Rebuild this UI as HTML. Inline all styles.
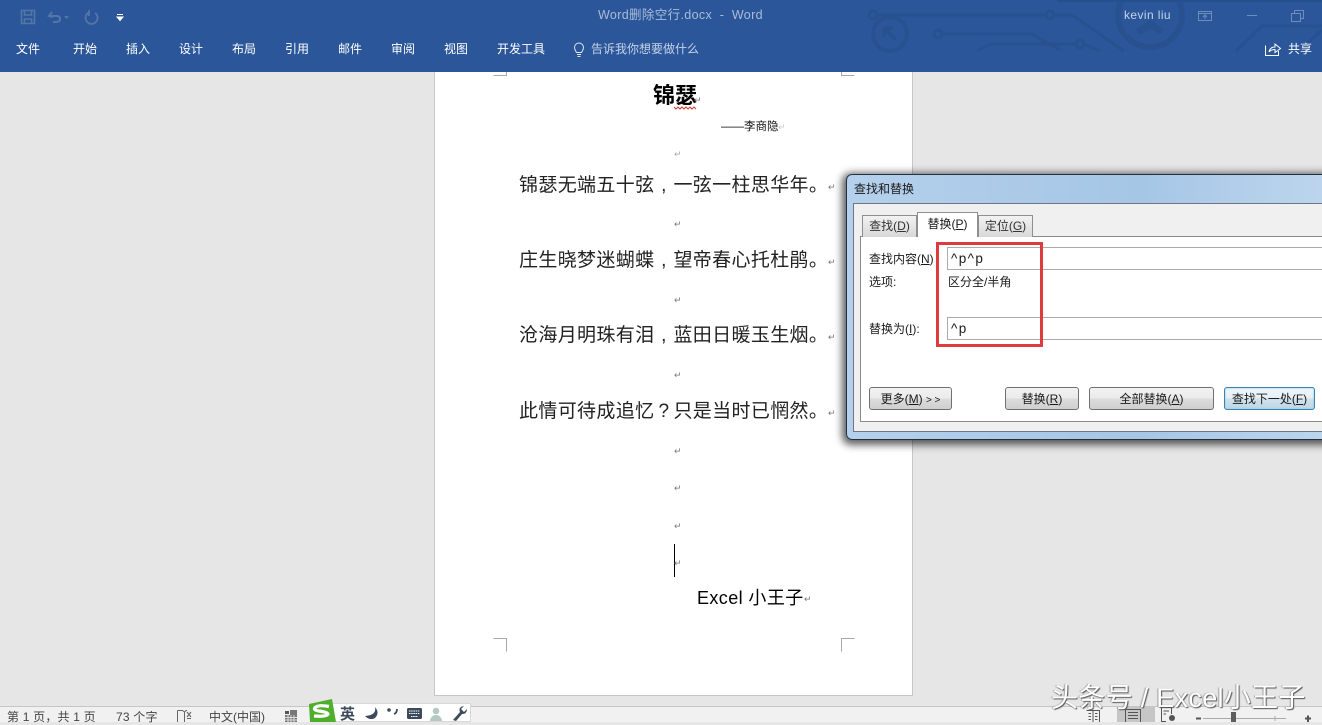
<!DOCTYPE html>
<html lang="zh"><head><meta charset="utf-8"><style>
html,body{margin:0;padding:0}
body{width:1322px;height:722px;overflow:hidden;position:relative;background:#e6e6e6;font-family:"Liberation Sans","Noto Sans CJK SC",sans-serif;color:#111}
.a{position:absolute;white-space:nowrap}
.r{color:#fff;font-size:12px;top:41px;line-height:16px}
.m{position:absolute;font-size:9px;color:#777;line-height:10px}
.p{font-size:19px;left:519px;line-height:26px;letter-spacing:0.35px;color:#222}
.p i{display:inline-block;width:19px;text-align:center;font-style:normal}
.d{font-size:12px;line-height:16px;color:#1a1a1a}
u{text-underline-offset:1px}
.b{position:absolute;top:387px;height:23px;box-sizing:border-box;border:1px solid #707070;border-radius:3px;background:linear-gradient(#f2f2f2 0,#ebebeb 48%,#dcdcdc 52%,#cfcfcf 100%);font-size:12px;line-height:23px;text-align:center;color:#1a1a1a}
.s{font-size:12px;top:709px;line-height:16px;color:#444;letter-spacing:.2px}
</style></head><body>
<!-- title bar -->
<div class="a" style="left:0;top:0;width:1322px;height:72px;background:#2b579a"></div>
<svg class="a" style="left:860px;top:0" width="462" height="72" fill="none" stroke="#27528f" stroke-width="3">
<circle cx="13" cy="15" r="4"/><path d="M17 15H186"/><circle cx="190" cy="15" r="4"/><path d="M194 15H212L264 51"/>
<circle cx="30" cy="34" r="17" stroke-width="4"/><path d="M24 28L36 40M24 28h9M24 28v9" stroke-width="4"/>
<circle cx="78" cy="34" r="4"/><path d="M82 34H172L200 50"/><circle cx="220" cy="44" r="4"/><path d="M118 51Q126 44 136 44H216M224 44L240 51"/>
<circle cx="290" cy="15" r="32" stroke-width="6"/><path d="M278 32L290 24L302 32" stroke-width="7"/>
<path d="M376 51L402 26H462M446 44L462 30"/></svg>
<div class="a" style="left:1057px;top:0;width:265px;height:2px;background:#24508f"></div>
<!-- QAT -->
<svg class="a" style="left:20px;top:9px" width="110" height="16" fill="none" stroke="#5575a9" stroke-width="1.6">
<path d="M1.500 1.500H14.500V14.500H1.500ZM4.500 1.500V6H11.500V1.500M4.500 14.500V10H11.500V14.500"/>
<path d="M32 3L29 7L33 8M29.500 7H37Q40 7 40 10Q40 13 36 13H33" stroke-width="2"/><path d="M44 7h5l-2.500 3z" fill="#5575a9" stroke="none"/>
<path d="M69 3.500A6 6 0 1 0 75 4M69 1V7" stroke-width="1.800"/>
<path d="M97 5.500h6M97 8h6l-3 3.500z" stroke="#fff" stroke-width="1" fill="#fff"/></svg>
<div class="a" style="left:598px;top:7px;font-size:12.500px;line-height:16px;color:#a9bcd9;letter-spacing:.35px">Word删除空行.docx&nbsp; -&nbsp; Word</div>
<div class="a" style="left:1124px;top:7px;font-size:12px;line-height:16px;color:#c5d2e6;letter-spacing:.4px">kevin liu</div>
<svg class="a" style="left:1195px;top:8px" width="120" height="16" fill="none" stroke="#6f8dba">
<path d="M3.500 3.500H16.500V12.500H3.500ZM3.500 5.500H16.500M8 9L10 7L12 9M10 7V11"/><path d="M52 7.500H62"/><path d="M96.500 5.500H105.500V13.500H96.500ZM99.500 5.500V2.500H108.500V10.500H105.500"/></svg>
<div class="a r" style="left:16px">文件</div><div class="a r" style="left:73px">开始</div><div class="a r" style="left:126px">插入</div><div class="a r" style="left:179px">设计</div><div class="a r" style="left:232px">布局</div><div class="a r" style="left:285px">引用</div><div class="a r" style="left:338px">邮件</div><div class="a r" style="left:391px">审阅</div><div class="a r" style="left:444px">视图</div><div class="a r" style="left:497px">开发工具</div>
<svg class="a" style="left:573px;top:41px" width="12" height="17" fill="none" stroke="#dfe6f1"><path d="M3.500 11.500C2.500 9.500 1.500 8.500 1.500 6.500A4.500 4.500 0 0 1 10.500 6.500C10.500 8.500 9.500 9.500 8.500 11.500ZM4 13.500H8M4.500 15.500H7.500"/></svg>
<div class="a r" style="left:591px;color:#c4d1e6">告诉我你想要做什么</div>
<svg class="a" style="left:1264px;top:41px" width="18" height="16" fill="none" stroke="#fff"><path d="M1.500 4.500V14.500H14.500V10M5 11Q6 6 11 6V3L16.500 7.500L11 11.500V8.500Q7 8.500 5 11Z"/></svg>
<div class="a r" style="left:1288px">共享</div>
<!-- page -->
<div class="a" style="left:434px;top:72px;width:477px;height:623px;background:#fff;border:solid #c6c6c6;border-width:0 1px 1px 1px"></div>
<svg class="a" style="left:490px;top:70px" width="370" height="585" fill="none" stroke="#a8a8a8">
<path d="M3.500 5.500H16.500V2M351.500 2V5.500H364.500M3.500 568.500H16.500V581.500M364.500 568.500H351.500V581.500"/></svg>
<div class="a" style="left:653px;top:82px;font-size:22px;line-height:28px;font-weight:bold;color:#000">锦瑟</div>
<svg class="a" style="left:674px;top:106px" width="24" height="4" fill="none" stroke="#c8383a"><path d="M0 1l2 2 2-2 2 2 2-2 2 2 2-2 2 2 2-2 2 2 2-2 2 2"/></svg>
<div class="m" style="left:694px;top:95px">↵</div>
<div class="a" style="left:721px;top:120px;font-size:11.500px;line-height:15px;color:#111">——李商隐</div>
<div class="m" style="left:778px;top:122px;color:#ccc">↵</div>
<div class="m" style="left:674px;top:149px;color:#aaa">↵</div>
<div class="a p" style="top:173px">锦瑟无端五十弦<i>,</i>一弦一柱思华年。</div><div class="m" style="left:828px;top:182px">↵</div>
<div class="m" style="left:674px;top:219px">↵</div>
<div class="a p" style="top:248px">庄生晓梦迷蝴蝶<i>,</i>望帝春心托杜鹃。</div><div class="m" style="left:828px;top:257px">↵</div>
<div class="m" style="left:674px;top:295px">↵</div>
<div class="a p" style="top:323px">沧海月明珠有泪<i>,</i>蓝田日暖玉生烟。</div><div class="m" style="left:828px;top:332px">↵</div>
<div class="m" style="left:674px;top:370px">↵</div>
<div class="a p" style="top:399px">此情可待成追忆<i>?</i>只是当时已惘然。</div><div class="m" style="left:828px;top:408px">↵</div>
<div class="m" style="left:674px;top:446px">↵</div><div class="m" style="left:674px;top:483px">↵</div><div class="m" style="left:674px;top:521px">↵</div>
<div class="a" style="left:674px;top:544px;width:1px;height:33px;background:#000"></div><div class="m" style="left:674px;top:558px">↵</div>
<div class="a" style="left:697px;top:585px;font-size:18px;line-height:26px;color:#000;letter-spacing:.4px">Excel 小王子</div><div class="m" style="left:804px;top:594px">↵</div>
<!-- dialog -->
<div class="a" style="left:846px;top:174px;width:490px;height:266px;box-sizing:border-box;border:1px solid #24303f;border-radius:6px;background:linear-gradient(90deg,#b4d0ec,#a6c6e6 60%,#bed6ee);box-shadow:-1px 2px 8px 3px rgba(0,0,0,.62)"></div>
<div class="a d" style="left:854px;top:181px">查找和替换</div>
<div class="a" style="left:853px;top:203px;width:469px;height:229px;box-sizing:border-box;border:1px solid #6d7784;border-right:0;background:#f0f0f0"></div>
<div class="a" style="left:860px;top:236px;width:462px;height:186px;box-sizing:border-box;border:1px solid #8a8a8a;border-right:0;background:#fff"></div>
<div class="a d" style="left:862px;top:215px;width:55px;height:22px;box-sizing:border-box;border:1px solid #8f8f8f;border-bottom:0;background:linear-gradient(#f2f2f2,#d8d8d8);text-align:center;line-height:20px;color:#333">查找(<u>D</u>)</div>
<div class="a d" style="left:978px;top:215px;width:55px;height:22px;box-sizing:border-box;border:1px solid #8f8f8f;border-bottom:0;background:linear-gradient(#f2f2f2,#d8d8d8);text-align:center;line-height:20px;color:#333">定位(<u>G</u>)</div>
<div class="a d" style="left:917px;top:212px;width:61px;height:25px;box-sizing:border-box;border:1px solid #8f8f8f;border-bottom:0;background:#fff;text-align:center;line-height:23px">替换(<u>P</u>)</div>
<div class="a d" style="left:869px;top:251px">查找内容(<u>N</u>)</div>
<div class="a d" style="left:869px;top:274px">选项:</div>
<div class="a d" style="left:869px;top:321px">替换为(<u>I</u>):</div>
<div class="a d" style="left:948px;top:274px">区分全/半角</div>
<div class="a" style="left:947px;top:247px;width:380px;height:23px;box-sizing:border-box;border:1px solid #ababab;background:#fff"></div>
<div class="a" style="left:947px;top:317px;width:380px;height:23px;box-sizing:border-box;border:1px solid #ababab;background:#fff"></div>
<div class="a d" style="left:951px;top:251px;font-size:13.500px;letter-spacing:1.400px">^p^p</div>
<div class="a d" style="left:951px;top:321px;font-size:13.500px;letter-spacing:1.400px">^p</div>
<div class="a" style="left:936px;top:242px;width:107px;height:105px;box-sizing:border-box;border:3px solid #dd3b40"></div>
<div class="b" style="left:869px;width:83px">更多(<u>M</u>) <span style="font-size:10px">&gt; &gt;</span></div>
<div class="b" style="left:1005px;width:74px">替换(<u>R</u>)</div>
<div class="b" style="left:1089px;width:125px">全部替换(<u>A</u>)</div>
<div class="b" style="left:1224px;width:91px;border-color:#3c7fb1;box-shadow:inset 0 0 2px #7fd0ee;background:linear-gradient(#f0f7fb,#e4eff5 48%,#d0e2ec 52%,#bfd6e4)">查找下一处(<u>F</u>)</div>
<!-- status bar -->
<div class="a" style="left:0;top:706px;width:1322px;height:16px;background:#f1f1f1;border-top:1px solid #c6c6c6;box-sizing:border-box"></div>
<div class="a s" style="left:7px">第 1 页，共 1 页</div>
<div class="a s" style="left:116px">73 个字</div>
<svg class="a" style="left:177px;top:709px" width="16" height="13" fill="none" stroke="#666"><path d="M.5 1.500H5.500L7.500 3V13M.5 1.500V13M7.500 3L9 1.500H10"/><path d="M10 3L14 8M14 3L10 8M10 9.500H14" stroke-width="1.100"/></svg>
<div class="a s" style="left:209px;letter-spacing:0">中文(中国)</div>
<svg class="a" style="left:284px;top:709px" width="14" height="13"><rect x="1" y="2" width="4" height="3" fill="#555"/><rect x="6" y="1" width="7" height="12" fill="#777"/><rect x="1" y="6" width="12" height="7" fill="#777"/><path d="M1 8.500h12M1 11h12M4 6v7M7 6v7M10 6v7" stroke="#ddd"/></svg>
<!-- IME -->
<div class="a" style="left:330px;top:703px;width:141px;height:19px;background:#fff;border:1px solid #d8d8d8;box-sizing:border-box"></div>
<svg class="a" style="left:306px;top:698px" width="30" height="24"><path d="M3 6L26 1L30 24H4Z" fill="#4faf2a"/><path d="M23 8.500Q13 6.500 9 9.500Q7 12 13 13Q21 14 22 16Q21 19 8 18" fill="none" stroke="#fff" stroke-width="3.200"/></svg>
<div class="a" style="left:340px;top:706px;font-size:15px;line-height:17px;font-weight:bold;color:#3c4a5c">英</div>
<svg class="a" style="left:362px;top:704px" width="106" height="18">
<path d="M13 3Q15 11 3 12Q8 17 13 14Q18 9 13 3Z" fill="#3c4a5c"/>
<circle cx="27" cy="6" r="1.800" fill="#3c4a5c"/><path d="M35 5Q35 9 32 10" stroke="#3c4a5c" stroke-width="1.800" fill="none"/>
<rect x="45" y="4" width="15" height="11" rx="1.500" fill="#3c4a5c"/><path d="M47 7h11M47 9.500h11M49 12.500h7" stroke="#fff" stroke-dasharray="1.500 .7"/>
<circle cx="74" cy="7" r="3.300" fill="#b5c9c2"/><path d="M68 17Q69 11 74 11Q79 11 80 17Z" fill="#b5c9c2"/>
<path d="M91 16L98 8Q96 3 102 2L99 5L102 8L105 5Q105 10 100 10L94 17Z" fill="#3c4a5c"/></svg>
<!-- right status -->
<svg class="a" style="left:1082px;top:706px" width="240" height="16" fill="none" stroke="#555">
<rect x="35" y="0" width="38" height="16" fill="#c6c6c6" stroke="none"/>
<path d="M4.500 4.500H17.500V16M11 4.500V16M6.500 7.500H9M13 7.500H15.500M6.500 10.500H9M13 10.500H15.500M6.500 13.500H9M13 13.500H15.500"/>
<path d="M43.500 3.500H58.500V16M43.500 3.500V16M46 6.500H56M46 9.500H56M46 12.500H56"/>
<path d="M79.500 1.500H89.500V8M79.500 1.500V15.500H84M81.500 5H87M81.500 8H84"/><circle cx="90" cy="12" r="3" fill="#555" stroke="none"/>
<path d="M114 12.500H119" stroke-width="2"/><path d="M121 12.500H204" stroke="#aaa"/><path d="M193 10V15" stroke="#aaa"/>
<path d="M223 12.500H229M226 9.500V16" stroke-width="2"/>
</svg>
<div class="a" style="left:1231px;top:712px;width:5px;height:10px;background:#5e5e5e"></div>
<!-- watermark -->
<div class="a" style="left:1051px;top:681px;font-size:27px;line-height:34px;color:#fff;text-shadow:1px 1px 1px #555,-1px 0 1px rgba(90,90,90,.5);letter-spacing:.3px">头条号 / Excel小王子</div>
</body></html>
